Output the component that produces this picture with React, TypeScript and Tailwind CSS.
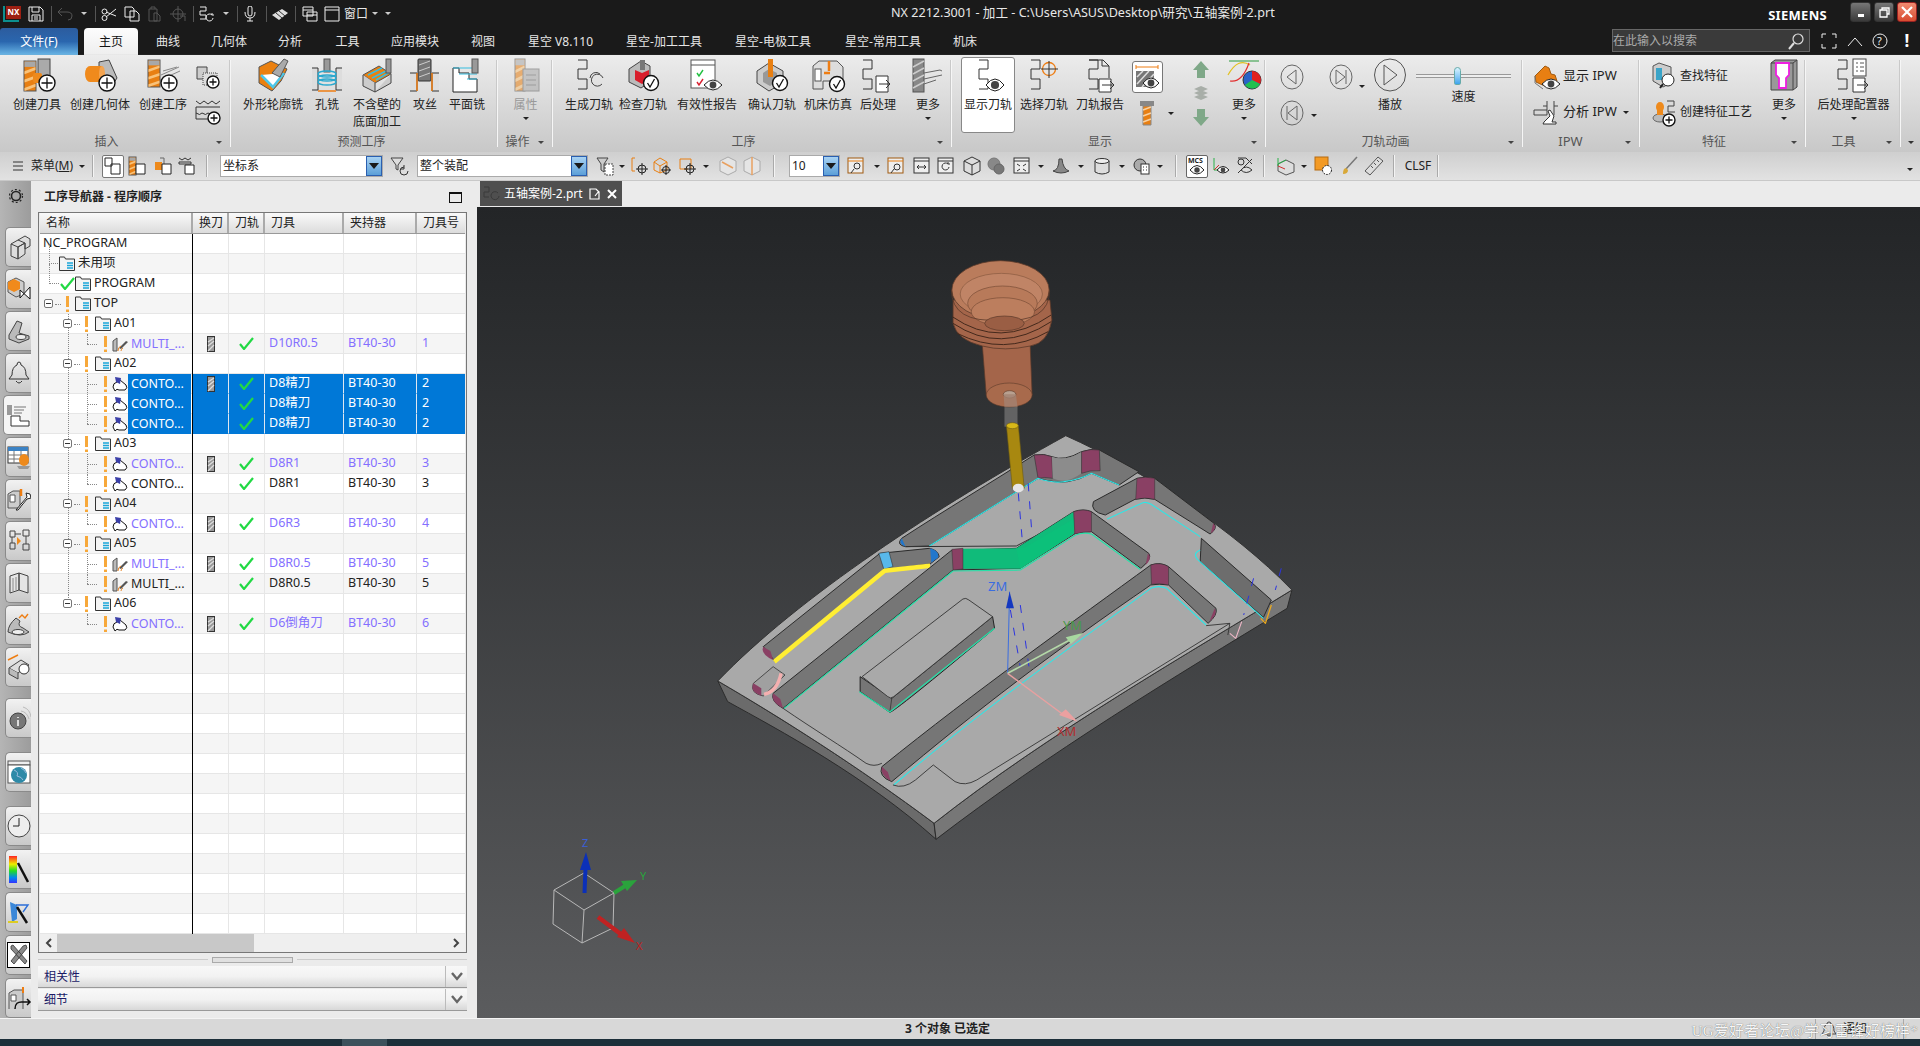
import React from "react";

type P = { children?: React.ReactNode; w?: number; h?: number };
const I = ({ children, w = 34, h = 34 }: P) => (
  <svg width={w} height={h} viewBox={`0 0 ${w} ${h}`} className="block shrink-0 overflow-visible" fill="none">
    {children}
  </svg>
);

const Mill = ({ x = 2, y = 4, w = 12, h = 28 }: { x?: number; y?: number; w?: number; h?: number }) => {
  const s = h / 5;
  return (
    <g>
      <rect x={x} y={y} width={w} height={h} fill="#e87f12" stroke="#555" strokeWidth="1" />
      <rect x={x + 0.5} y={y + 0.5} width={w - 1} height={s * 0.9} fill="#a8a8a8" />
      {[1, 2.4, 3.8].map((k) => (
        <path key={k} d={`M${x + 0.5} ${y + s * (k + 0.7)}L${x + w - 0.5} ${y + s * k}V${y + s * (k + 0.5)}L${x + 0.5} ${y + s * (k + 1.2)}Z`} fill="#f8c27a" />
      ))}
    </g>
  );
};
const Plus = ({ cx = 25, cy = 24, r = 8 }: { cx?: number; cy?: number; r?: number }) => (
  <g>
    <circle cx={cx} cy={cy} r={r} fill="#fff" stroke="#111" strokeWidth="1.4" />
    <path d={`M${cx - r + 2.5} ${cy}H${cx + r - 2.5}M${cx} ${cy - r + 2.5}V${cy + r - 2.5}`} stroke="#111" strokeWidth="1.3" />
  </g>
);
const Chk = ({ cx = 26, cy = 25, r = 7.5 }: { cx?: number; cy?: number; r?: number }) => (
  <g>
    <circle cx={cx} cy={cy} r={r} fill="#fff" stroke="#111" strokeWidth="1.4" />
    <path d={`M${cx - 3.5} ${cy}l2.5 4l4.5 -8`} stroke="#111" strokeWidth="1.3" />
  </g>
);
const Eye = ({ cx = 24, cy = 26, rx = 9, ry = 6 }: { cx?: number; cy?: number; rx?: number; ry?: number }) => (
  <g>
    <path d={`M${cx - rx} ${cy}Q${cx} ${cy - ry * 2} ${cx + rx} ${cy}Q${cx} ${cy + ry * 2} ${cx - rx} ${cy}Z`} fill="#fff" stroke="#222" strokeWidth="1" />
    <circle cx={cx} cy={cy} r={ry * 0.68} fill="#444" />
  </g>
);
const Sp = ({ x = 2, y = 1 }: { x?: number; y?: number }) => (
  <path d={`M${x} ${y}h9v9h-9v10h9v10h-9`} stroke="#333" strokeWidth="1" fill="none" />
);
const Arrow = ({ c = "" }: { c?: string }) => <span className={`inline-block h-0 w-0 border-x-[3px] border-t-[3px] border-x-transparent border-t-[#222] ${c}`} />;

const ChkG = () => (
  <svg width="15" height="13" viewBox="0 0 15 13" className="block shrink-0">
    <path d="M1 7l4 5l9 -11" stroke="#22d944" strokeWidth="2.2" fill="none" />
  </svg>
);
const Folder = () => (
  <svg width="16" height="15" viewBox="0 0 16 15" className="block shrink-0">
    <path d="M.5 14.5V1h5l1 2h9v11.5z" fill="#f4f4f4" stroke="#333" />
    <path d="M8 7h6M8 9.5h6M8 12h6" stroke="#1aa5d8" strokeWidth="1.4" />
  </svg>
);
const Bang = () => (
  <svg width="3" height="16" viewBox="0 0 3 16" className="block shrink-0">
    <path d="M0 0h3v11H0zM0 13.5h3V16H0z" fill="#f7a83a" />
  </svg>
);
const OpC = () => (
  <svg width="16" height="16" viewBox="0 0 16 16" className="block shrink-0">
    <path d="M1 11Q1 7 5 6l3-2l6 5q2 3-1 5H7Q5 12 3 15Z" fill="#fff" stroke="#111" />
    <path d="M3 1l6 1l-1 6L4 6z" fill="#3a3fa8" />
  </svg>
);
const OpM = () => (
  <svg width="16" height="16" viewBox="0 0 16 16" className="block shrink-0">
    <path d="M1 15V5l4-3v13z" fill="#bbb" stroke="#555" />
    <path d="M7 12l7-7l2 1l-7 7z" fill="#555" />
    <path d="M6 15q0-4 3-5M9 15q0-2 2-3" stroke="#e8872a" fill="none" />
  </svg>
);
const ToolCh = () => (
  <svg width="8" height="16" viewBox="0 0 8 16" className="block">
    <rect x=".5" y=".5" width="7" height="15" fill="#9a9a9a" stroke="#333" />
    <path d="M1 6l6-4M1 10l6-5M1 15l6-6" stroke="#ddd" strokeWidth="1.2" />
  </svg>
);

type Row = {
  k: "root" | "unused" | "prog" | "top" | "grp" | "op";
  t?: string;
  op?: "c" | "m";
  tool?: string;
  num?: string;
  blue?: boolean;
  sel?: boolean;
  ch?: boolean;
  last?: boolean;
  grpLast?: boolean;
  cont?: boolean;
  chk?: boolean;
};
const rows: Row[] = [
  { k: "root", t: "NC_PROGRAM" },
  { k: "unused", t: "未用项" },
  { k: "prog", t: "PROGRAM" },
  { k: "top", t: "TOP" },
  { k: "grp", t: "A01" },
  { k: "op", op: "m", t: "MULTI_...", tool: "D10R0.5", num: "1", blue: true, ch: true, last: true, cont: true, chk: true },
  { k: "grp", t: "A02" },
  { k: "op", op: "c", t: "CONTO...", tool: "D8精刀", num: "2", sel: true, ch: true, cont: true, chk: true },
  { k: "op", op: "c", t: "CONTO...", tool: "D8精刀", num: "2", sel: true, cont: true, chk: true },
  { k: "op", op: "c", t: "CONTO...", tool: "D8精刀", num: "2", sel: true, last: true, cont: true, chk: true },
  { k: "grp", t: "A03" },
  { k: "op", op: "c", t: "CONTO...", tool: "D8R1", num: "3", blue: true, ch: true, cont: true, chk: true },
  { k: "op", op: "c", t: "CONTO...", tool: "D8R1", num: "3", last: true, cont: true, chk: true },
  { k: "grp", t: "A04" },
  { k: "op", op: "c", t: "CONTO...", tool: "D6R3", num: "4", blue: true, ch: true, last: true, cont: true, chk: true },
  { k: "grp", t: "A05" },
  { k: "op", op: "m", t: "MULTI_...", tool: "D8R0.5", num: "5", blue: true, ch: true, cont: true, chk: true },
  { k: "op", op: "m", t: "MULTI_...", tool: "D8R0.5", num: "5", last: true, cont: true, chk: true },
  { k: "grp", t: "A06", grpLast: true },
  { k: "op", op: "c", t: "CONTO...", tool: "D6倒角刀", num: "6", blue: true, ch: true, last: true, chk: true },
];
const allRows: Row[] = [...rows, ...Array.from({ length: 15 }, () => ({ k: "root" } as Row))];

const Minus = ({ c }: { c: string }) => (
  <span className={`absolute top-[5px] flex h-[9px] w-[9px] items-center justify-center rounded-[2px] border border-[#777] bg-white ${c}`}>
    <span className="h-px w-[5px] bg-[#333]" />
  </span>
);

const NameCell = ({ r }: { r: Row }) => {
  const txt = r.sel ? "text-white" : r.blue ? "text-[#8470ff]" : "text-[#222]";
  return (
    <div className="h-full w-[153px] shrink-0 border-r border-black">
      <div className="relative flex h-full items-center border-b border-[#e6e6e6]">
        {r.k === "root" && r.t && <span className="pl-[3px]">{r.t}</span>}
        {r.k === "unused" && (
          <div className="flex items-center pl-[19px]">
            <span className="absolute left-[9px] top-[-9px] h-[19px] w-[9px] border-b border-l border-dotted border-[#888]" />
            <Folder />
            <span className="pl-[3px]">{r.t}</span>
          </div>
        )}
        {r.k === "prog" && (
          <div className="flex items-center pl-[20px]">
            <span className="absolute left-[9px] top-[-10px] h-[20px] w-[10px] border-b border-l border-dotted border-[#888]" />
            <ChkG />
            <Folder />
            <span className="pl-[3px]">{r.t}</span>
          </div>
        )}
        {r.k === "top" && (
          <div className="flex items-center pl-[26px]">
            <Minus c="left-[4px]" />
            <span className="absolute left-[15px] top-[10px] w-[6px] border-t border-dotted border-[#888]" />
            <Bang />
            <span className="w-[6px]" />
            <Folder />
            <span className="pl-[3px]">{r.t}</span>
          </div>
        )}
        {r.k === "grp" && (
          <div className="flex items-center pl-[45px]">
            <span className={`absolute left-[28px] top-0 border-l border-dotted border-[#888] ${r.grpLast ? "h-[6px]" : "h-full"}`} />
            <Minus c="left-[23px]" />
            <span className="absolute left-[34px] top-[10px] w-[6px] border-t border-dotted border-[#888]" />
            <Bang />
            <span className="w-[7px]" />
            <Folder />
            <span className="pl-[3px]">{r.t}</span>
          </div>
        )}
        {r.k === "op" && (
          <div className="flex h-full items-center pl-[64px]">
            {r.cont && <span className="absolute left-[28px] top-0 h-full border-l border-dotted border-[#888]" />}
            <span className={`absolute left-[47px] top-0 border-l border-dotted border-[#888] ${r.last ? "h-[10px]" : "h-full"}`} />
            <span className="absolute left-[47px] top-[10px] w-[10px] border-t border-dotted border-[#888]" />
            <Bang />
            <span className="w-[5px]" />
            {r.op === "m" ? <OpM /> : <OpC />}
            <span className={`flex h-[20px] w-[63px] items-center self-start ${r.sel ? "bg-[#0078d7]" : ""}`}>
              <span className={`pl-[3px] ${txt}`}>{r.t}</span>
            </span>
          </div>
        )}
      </div>
    </div>
  );
};

const TRow = ({ r, i }: { r: Row; i: number }) => {
  const txt = r.sel ? "text-white" : r.blue ? "text-[#8470ff]" : "text-[#222]";
  const cell = r.sel ? "bg-[#0078d7] border-r-[#dfe7f0] border-b-[#0078d7]" : "border-r-[#e6e6e6] border-b-[#e6e6e6]";
  return (
    <div className={`flex h-[20px] shrink-0 ${i % 2 ? "bg-[#f5f5f5]" : "bg-white"}`}>
      <NameCell r={r} />
      <div className={`flex h-full w-[36px] items-center justify-center border-r border-b ${cell}`}>{r.ch && <ToolCh />}</div>
      <div className={`flex h-full w-[36px] items-center justify-center border-r border-b ${cell}`}>{r.chk && <ChkG />}</div>
      <div className={`flex h-full w-[79px] items-center border-r border-b pl-[4px] ${cell} ${txt}`}>{r.tool}</div>
      <div className={`flex h-full w-[73px] items-center border-r border-b pl-[4px] ${cell} ${txt}`}>{r.tool && "BT40-30"}</div>
      <div className={`flex h-full flex-1 items-center border-b pl-[5px] ${r.sel ? "bg-[#0078d7] border-b-[#0078d7]" : "border-b-[#e6e6e6]"} ${txt}`}>{r.num}</div>
    </div>
  );
};

const RB = ({ children, active }: { children: React.ReactNode; active?: boolean }) => (
  <div className={`flex h-[40px] items-center justify-center rounded-l-[5px] border border-r-0 border-[#8a8a8a] ${active ? "ml-[3px] w-[28px] bg-[#f4f4f4]" : "ml-[5px] w-[26px] bg-gradient-to-b from-[#f2f2f2] to-[#c9c9c9]"}`}>
    {children}
  </div>
);
const R = ({ children }: P) => <I w={24} h={26}>{children}</I>;

const Rail = () => (
  <div className="flex w-[31px] shrink-0 flex-col bg-gradient-to-r from-[#b5b5b5] to-[#9c9c9c]">
    <div className="flex h-[46px] justify-center pt-[7px] pl-[0px]">
      <svg width="16" height="16" viewBox="0 0 16 16"><circle cx="8" cy="8" r="4.5" stroke="#222" strokeWidth="1.6" fill="none" /><circle cx="8" cy="8" r="6.5" stroke="#222" strokeWidth="1.2" strokeDasharray="2 2.1" fill="none" /></svg>
    </div>
    <div className="flex flex-col gap-[2px]">
      <RB><R><path d="M4 10l7-4l7 3l-7 4zM4 10v12l7 3V13M11 13l7-4v11l-7 5zM11 6l7-4l5 3v7l-5 3V9" fill="#ddd" stroke="#444" /></R></RB>
      <RB><R><path d="M9 2l8 4v12l-8 3l-8-5V6z" fill="#ccc" stroke="#555" /><path d="M1 6l6-3l6 3v7l-6 3l-6-3z" fill="#f08a1c" /><path d="M13 14l10 9V11L13 22z" fill="#fff" stroke="#111" /></R></RB>
      <RB><R><path d="M2 17L10 3l5 2l-3 10l10 3v3l-10 4L2 21z" fill="#bbb" stroke="#444" /><ellipse cx="14" cy="19" rx="5" ry="2.5" fill="#eee" stroke="#444" /></R></RB>
      <RB><R><path d="M12 2q2 0 2 3q5 2 5 10l3 4H2l3-4q0-8 5-10q0-3 2-3z" fill="none" stroke="#333" /><path d="M9 21q3 4 6 0" stroke="#333" /></R></RB>
      <RB active><R><path d="M1 3h5v10H1z" fill="#999" /><path d="M8 5h12M8 8h10M8 11h8" stroke="#777" /><path d="M5 24V14h9v5h9v5z" fill="#fff" stroke="#333" /></R></RB>
      <RB><R><rect x="1" y="3" width="20" height="16" fill="#fff" stroke="#333" /><rect x="1" y="3" width="20" height="4" fill="#3b82c4" /><path d="M1 11h20M1 15h20M7 7v12M14 7v12" stroke="#777" /><ellipse cx="17" cy="16" rx="5" ry="6" fill="#ee8a1c" /><path d="M10 22h13l-2 3H12z" fill="#999" /></R></RB>
      <RB><R><path d="M1 22V8l5-3h7v17z" fill="#ccc" stroke="#555" /><path d="M3 9h5v7H3z" fill="#fff" stroke="#555" /><path d="M14 3v7" stroke="#ee7d12" strokeWidth="2.5" /><path d="M9 24L20 11l-1-4l4 1l1 4l-4 1l-9 11z" fill="#fff" stroke="#222" /></R></RB>
      <RB><R><path d="M3 3h5v6H3zM3 15h5v6H3zM16 2h6v6h-6zM16 16h6v6h-6zM5 9v6M19 8v8M8 6h6" stroke="#444" fill="none" /><path d="M10 9l4 4l-4 4z" fill="#ee8a1c" /></R></RB>
      <RB><R><path d="M3 6l9-3v17l-9 3zM12 3l9 3v17l-9-3z" fill="#e5e5e5" stroke="#444" /><path d="M6 8v13M9 7v13" stroke="#888" /></R></RB>
      <RB><R><path d="M1 20q0-7 8-14l4 3q-3 5 3 7l6 4q-8 6-21 0z" fill="#bbb" stroke="#444" /><ellipse cx="11" cy="20" rx="6" ry="2.5" fill="#eee" stroke="#444" /><path d="M12 6l3-3l3 3l3-4" stroke="#ee7d12" fill="none" strokeWidth="1.4" /></R></RB>
      <RB><R><path d="M2 14L14 6l8 5L11 19z" fill="#ddd" stroke="#444" /><path d="M2 14v6l9 5v-6" fill="#bbb" stroke="#444" /><path d="M1 6l10-5" stroke="#ee7d12" strokeWidth="1.4" /><circle cx="17" cy="15" r="5" fill="#fff" stroke="#333" /></R></RB>
    </div>
    <div className="mt-[11px]">
      <RB><R><circle cx="11" cy="16" r="8" fill="#777" stroke="#444" /><path d="M11 12v1M11 15v6" stroke="#fff" strokeWidth="1.5" /><path d="M14 6q6 1 8 8M16 2q7 2 8 10" stroke="#bbb" fill="none" /></R></RB>
    </div>
    <div className="mt-[14px]">
      <RB><R><rect x="1" y="2" width="22" height="4" fill="#eee" stroke="#555" /><rect x="1" y="6" width="22" height="18" fill="#fff" stroke="#555" /><circle cx="12" cy="16" r="8" fill="#2e8aa8" /><path d="M7 11q5 2 3 6q5 1 6 4M14 9q4 2 5 5" stroke="#9bd" fill="none" /></R></RB>
    </div>
    <div className="mt-[14px] flex flex-col gap-[3px]">
      <RB><R><circle cx="12" cy="13" r="11" fill="#eee" stroke="#444" /><path d="M12 5v8H6" stroke="#222" /></R></RB>
      <RB><svg width="24" height="28" viewBox="0 0 24 28"><defs><linearGradient id="rb" x1="0" y1="0" x2="0" y2="1"><stop offset="0" stopColor="#f22" /><stop offset=".3" stopColor="#ee0" /><stop offset=".55" stopColor="#2d2" /><stop offset=".8" stopColor="#08e" /><stop offset="1" stopColor="#33f" /></linearGradient></defs><rect x="2" y="1" width="8" height="27" fill="url(#rb)" /><path d="M11 8l10 19" stroke="#111" strokeWidth="2.5" /></svg></RB>
      <RB><R><path d="M3 3l7 3v14l-5 3z" fill="#3a87d8" /><path d="M9 6h12l-5 7" stroke="#2c6fd8" strokeWidth="1.4" fill="none" /><path d="M10 8l10 16" stroke="#111" strokeWidth="2.5" /><path d="M1 23h10" stroke="#dc2" strokeWidth="2" /></R></RB>
      <RB><div className="h-[26px] w-[23px] border border-black bg-white"><svg width="21" height="24" viewBox="0 0 21 24" className="block"><path d="M3 3l2-1l14 16l-2 3L3 6zM18 2l1 3L6 21l-3-3L15 3z" fill="#8a8a8a" stroke="#333" strokeWidth=".8" /></svg></div></RB>
      <RB><R><path d="M2 24V8l5-3h9v19" fill="#ccc" stroke="#555" /><path d="M16 2v6" stroke="#ee7d12" strokeWidth="2" /><path d="M4 10h5v6H4z" fill="#fff" stroke="#555" /><path d="M8 24q0-8 8-7h7M20 14l3 3l-3 3" stroke="#111" fill="none" strokeWidth="1.5" /></R></RB>
    </div>
  </div>
);

const Item = ({ c, label, icon, arrow, two }: { c: string; label: string; icon: React.ReactNode; arrow?: boolean; two?: string }) => (
  <div className={`flex shrink-0 flex-col items-center pt-[4px] ${c}`}>
    <div className="flex h-[34px] items-center justify-center">{icon}</div>
    <div className="mt-[3px] whitespace-nowrap leading-[17px]">{label}</div>
    {two && <div className="whitespace-nowrap leading-[17px]">{two}</div>}
    {arrow && <Arrow c="mt-[4px]" />}
  </div>
);
const Group = ({ c, label, children, lc = "", noArrow }: { c: string; label: string; children: React.ReactNode; lc?: string; noArrow?: boolean }) => (
  <div className={`relative flex h-full shrink-0 flex-col ${c}`}>
    <div className="flex h-[77px]">{children}</div>
    <div className={`flex h-[20px] items-center justify-center text-[#555] ${lc}`}>{label}</div>
    {!noArrow && <Arrow c="absolute bottom-[8px] right-[9px] border-t-[#444]" />}
    <span className="absolute bottom-[5px] right-0 top-[5px] w-[2px] border-r border-[#f6f6f6] bg-[#c9c9c9]" />
  </div>
);

const Ribbon = () => (
  <div className="flex h-[97px] shrink-0 bg-gradient-to-b from-[#ececec] to-[#c8c8c8] text-[12px] text-[#222] shadow-[0_1px_2px_#888]">
    <Group c="w-[231px]" label="插入" lc="pr-[18px]">
      <Item c="ml-[5px] w-[64px]" label="创建刀具" icon={<I><Mill x={4} y={2} w={12} h={30} /><rect x="18" y="0" width="12" height="18" fill="#aaa" stroke="#444" /><rect x="13" y="14" width="9" height="10" rx="2" fill="#ee8a1c" /><Plus cx={27} cy={24} /></I>} />
      <Item c="w-[62px]" label="创建几何体" icon={<I><path d="M16 3l10-2l8 18l-8 12L16 18z" fill="#bbb" stroke="#444" /><ellipse cx="7" cy="15" rx="5" ry="8" fill="#f08a1c" /><rect x="7" y="7" width="12" height="16" fill="#f08a1c" /><ellipse cx="19" cy="15" rx="3" ry="8" fill="#f4a450" /><Plus cx={24} cy={24} /></I>} />
      <Item c="w-[64px]" label="创建工序" icon={<I><Mill x={2} y={1} w={12} h={27} /><path d="M15 16l18-8M14 21l20-9M17 12l14-4" stroke="#888" /><Plus cx={23} cy={24} /></I>} />
      <div className="flex w-[26px] flex-col items-center">
        <div className="mt-[10px]"><I w={26} h={24}><path d="M2 2h10v12H2z" fill="#ccc" stroke="#444" /><path d="M8 8h14v12H8z" fill="#ddd" stroke="#444" strokeDasharray="1 1" /><Plus cx={18} cy={17} r={6} /></I></div>
        <div className="mt-[11px]"><I w={26} h={24}><path d="M1 1l4 3l4-3l4 3l4-3l4 3l4-3M1 7h24M1 7v12h12M1 13q4 3 6 0q4 3 6 0q4 3 6 0" stroke="#333" fill="none" /><Plus cx={19} cy={18} r={6} /></I></div>
      </div>
    </Group>
    <Group c="w-[267px]" label="预测工序" lc="pr-[6px]" noArrow>
      <Item c="ml-[7px] w-[70px]" label="外形轮廓铣" icon={<I><path d="M3 8l12-6l16 8l-6 12L16 32L3 24z" fill="#ea8010" stroke="#555" /><path d="M5 16L17 28L28 14" stroke="#4cc7ea" strokeWidth="2.5" fill="#fff" /><path d="M16 14L28 0l4 2l-8 16z" fill="#aaa" stroke="#555" /></I>} />
      <Item c="w-[38px]" label="孔铣" icon={<I><rect x="14" y="0" width="6" height="13" fill="#999" stroke="#555" /><path d="M2 9h6v22H2M32 9h-6v22h6" fill="#ddd" stroke="#333" /><path d="M8 32h18" stroke="#ee7d12" strokeWidth="1.5" /><ellipse cx="17" cy="15" rx="9" ry="3" stroke="#2ba9cf" strokeWidth="1.5" /><ellipse cx="17" cy="19" rx="9" ry="3" stroke="#2ba9cf" strokeWidth="1.5" /><ellipse cx="17" cy="23" rx="9" ry="3" stroke="#2ba9cf" strokeWidth="1.5" /></I>} />
      <Item c="w-[62px]" label="不含壁的" two="底面加工" icon={<I><path d="M3 16l16-9l12 8l-16 9z" fill="#ea8010" stroke="#555" /><path d="M3 16v11l12 6v-9M15 33l16-9V15" fill="#ccc" stroke="#444" /><path d="M8 16l14-7M12 19l14-7M16 21l14-8" stroke="#37bde0" strokeWidth="1.6" /><rect x="26" y="0" width="5" height="14" fill="#999" stroke="#555" /></I>} />
      <Item c="w-[34px]" label="攻丝" icon={<I><rect x="10" y="0" width="13" height="22" rx="1" fill="#777" stroke="#333" /><path d="M11 6l11-4M11 12l11-4M11 18l11-4" stroke="#ccc" /><path d="M2 14h7v18H2M31 14h-7v18h7" fill="#ddd" stroke="#333" /><path d="M9 14v18M24 14v18" stroke="#ee7d12" strokeWidth="1.5" /></I>} />
      <Item c="w-[50px]" label="平面铣" icon={<I><path d="M3 9v24h24V20h-8v-6H9V9z" fill="#fff" stroke="#222" /><path d="M3 9h24M9 15h18M17 20h10" stroke="#37bde0" strokeWidth="1.2" /><rect x="22" y="0" width="6" height="14" fill="#999" stroke="#555" /></I>} />
    </Group>
    <Group c="w-[55px]" label="操作" lc="pr-[16px]">
      <Item c="w-[55px] text-[#999]" label="属性" arrow icon={<I><g opacity=".55"><Mill x={6} y={0} w={10} h={32} /><rect x="14" y="10" width="16" height="22" fill="#aaa" stroke="#666" /><path d="M17 16h10M17 21h10M17 26h10" stroke="#666" /></g></I>} />
    </Group>
    <Group c="w-[399px]" label="工序" lc="pr-[18px]">
      <Item c="ml-[8px] w-[56px]" label="生成刀轨" icon={<I><Sp x={6} /><path d="M31 19a6 6 0 1 0-1 6M18 19a6 6 0 0 1 10-4" stroke="#444" fill="none" /></I>} />
      <Item c="w-[52px]" label="检查刀轨" icon={<I><path d="M15 2l9 5v16l-9 6l-12-6V10z" fill="#bbb" stroke="#444" /><path d="M9 11l7 3l7-3v10l-7 4l-7-4z" fill="#d81e2c" /><rect x="14" y="1" width="5" height="10" fill="#777" /><Chk cx={25} cy={24} /></I>} />
      <Item c="w-[76px]" label="有效性报告" icon={<I><rect x="1" y="1" width="24" height="28" fill="#fff" stroke="#555" /><path d="M1 6h24" stroke="#555" /><path d="M7 14l2 3l4-6" stroke="#22c040" strokeWidth="1.4" /><path d="M7 23l2 3l4-6" stroke="#d82030" strokeWidth="1.4" /><Eye cx={23} cy={26} rx={9} ry={5} /></I>} />
      <Item c="w-[54px]" label="确认刀轨" icon={<I><path d="M2 12l12-8l14 8v12L14 32L2 24z" fill="#ccc" stroke="#444" /><path d="M8 14l6-4l8 4v9l-7 4l-7-4z" fill="#999" /><path d="M13 0h5v18h-5z" fill="#e87f12" /><Chk cx={25} cy={24} /></I>} />
      <Item c="w-[58px]" label="机床仿真" icon={<I><path d="M2 30V7l6-5h18l6 6v22H22v-8H12v8z" fill="#ddd" stroke="#555" /><rect x="4" y="10" width="6" height="12" fill="#fff" stroke="#555" /><path d="M18 2v10M13 14h6" stroke="#ee7d12" strokeWidth="2.5" /><Chk cx={26} cy={25} /></I>} />
      <Item c="w-[42px]" label="后处理" icon={<I><Sp x={2} /><path d="M15 17h12v16H15zM18 25h11M25 21l4 4l-4 4" stroke="#333" fill="#fff" /></I>} />
      <Item c="ml-[5px] w-[48px]" label="更多" arrow icon={<I><rect x="2" y="0" width="11" height="33" fill="#888" stroke="#555" /><path d="M2 8l11-6M2 15l11-6M2 22l11-6M2 29l11-6" stroke="#ccc" strokeWidth="1.5" /><path d="M13 14l16-3l2 1M13 20l18-4M13 25l12-4" stroke="#666" /></I>} />
    </Group>
    <Group c="w-[314px]" label="显示" lc="pr-[18px]">
      <div className="ml-[9px] mt-[2px] h-[76px] w-[54px] shrink-0 rounded-[3px] border border-[#888] bg-white">
        <Item c="mt-[-3px] w-[52px]" label="显示刀轨" icon={<I><Sp x={8} /><Eye cx={24} cy={26} /></I>} />
      </div>
      <Item c="w-[58px]" label="选择刀轨" icon={<I><Sp x={4} /><circle cx="22" cy="10" r="6.5" stroke="#ee7d12" strokeWidth="1.3" /><path d="M14 10h17M22 2v17" stroke="#333" /></I>} />
      <Item c="w-[54px]" label="刀轨报告" icon={<I><Sp x={6} /><path d="M6 1h14l6 6v12M19 1v6h7" stroke="#333" /><path d="M16 20h12v13H16zM19 26h12M27 22l4 4l-4 4" stroke="#333" fill="#fff" /></I>} />
      <div className="flex w-[36px] shrink-0 flex-col items-center pt-[6px] pl-[4px]">
        <div className="flex h-[32px] w-[31px] items-center justify-center rounded-[3px] border border-[#777] bg-white">
          <I w={26} h={26}><path d="M2 3h22M2 1v4M24 1v4" stroke="#ee7d12" /><rect x="2" y="7" width="18" height="16" fill="#777" /><path d="M3 13l6-6M3 20l12-13M8 23l12-13" stroke="#ddd" strokeWidth="1.5" /><Eye cx={17} cy={19} rx={8} ry={5} /></I>
        </div>
        <div className="mt-[7px]">
          <I w={14} h={26}><path d="M0 1h14v5H0z" fill="#888" /><path d="M3 6h8v19H3z" fill="#e87f12" stroke="#888" /><path d="M3 10l8-3M3 16l8-3M3 22l8-3" stroke="#f8d0a0" strokeWidth="1.5" /></I>
        </div>
      </div>
      <div className="flex w-[27px] shrink-0 items-end justify-end pb-[17px]"><Arrow c="mr-[16px]" /></div>
      <div className="flex w-[24px] shrink-0 flex-col items-center pt-[6px] ml-[-1px]">
        <I w={16} h={17}><path d="M8 0l8 9h-4v8H4V9H0z" fill="#7fa888" /></I>
        <div className="mt-[8px]"><I w={14} h={14}><path d="M7 0l7 3l-7 3l-7-3zM7 4l7 3l-7 3l-7-3zM7 8l7 3l-7 3l-7-3z" fill="#a8aea8" /></I></div>
        <div className="mt-[9px]"><I w={16} h={17}><path d="M8 17L16 8h-4V0H4v8H0z" fill="#7fa888" /></I></div>
      </div>
      <Item c="ml-[14px] w-[34px]" label="更多" arrow icon={<I><path d="M2 2h30" stroke="#2a9a3c" /><path d="M1 16q10-18 22-10" stroke="#e2c020" strokeWidth="1.2" /><path d="M3 22Q15 24 22 4" stroke="#e23030" strokeWidth="1.2" /><circle cx="25" cy="21" r="9" fill="#2a62c8" stroke="#333" /><path d="M25 21V12a9 9 0 0 1 8 13z" fill="#e02020" /><path d="M25 21l8 4a9 9 0 0 1-15 1z" fill="#22c050" /></I>} />
    </Group>
    <Group c="w-[257px]" label="刀轨动画" lc="pr-[18px]">
      <div className="flex w-[51px] flex-col items-center pl-[0px] pt-[9px]">
        <I w={24} h={26}><ellipse cx="12" cy="13" rx="11" ry="12" fill="none" stroke="#666" /><path d="M16 6v14l-9-7z" fill="none" stroke="#666" /></I>
        <div className="mt-[10px]"><I w={24} h={26}><ellipse cx="12" cy="13" rx="11" ry="12" fill="none" stroke="#666" /><path d="M17 6v14l-9-7zM7 6v14" fill="none" stroke="#666" /></I></div>
      </div>
      <div className="mt-[49px] w-[10px]"><Arrow c="ml-[-6px]" /></div>
      <div className="flex w-[28px] flex-col items-center pt-[9px]">
        <I w={24} h={26}><ellipse cx="12" cy="13" rx="11" ry="12" fill="none" stroke="#666" /><path d="M7 6v14l9-7zM17 6v14" fill="none" stroke="#666" /></I>
      </div>
      <div className="mt-[20px] w-[15px]"><Arrow c="ml-[4px]" /></div>
      <Item c="w-[40px]" label="播放" icon={<I h={34} w={34}><ellipse cx="17" cy="16" rx="15.5" ry="16" fill="none" stroke="#555" /><path d="M11 6v20l13-10z" fill="none" stroke="#555" /></I>} />
      <div className="relative ml-[6px] flex w-[95px] flex-col pt-[19px]">
        <div className="h-[4px] w-full border-y border-[#999] bg-[#eee]" />
        <div className="absolute left-[38px] top-[12px] h-[18px] w-[7px] rounded-t-[4px] rounded-b-[2px] border border-[#6aa] bg-gradient-to-b from-[#d8f4ff] to-[#3aa4ec]" />
        <div className="mt-[10px] text-center leading-[17px]">速度</div>
      </div>
    </Group>
    <Group c="w-[117px]" label="IPW" lc="pr-[22px] text-[13px]">
      <div className="flex flex-col pt-[3px] pl-[10px]">
        <div className="flex h-[36px] items-center">
          <I w={28} h={28}><path d="M2 14l10-10l4 2l2 6l4 1l2 6l-8 7L3 20z" fill="#e87f12" stroke="#a05a10" /><path d="M2 14v7l8 6" stroke="#777" /><Eye cx={18} cy={22} rx={9} ry={5} /></I>
          <span className="pl-[2px] text-[13px]">显示 IPW</span>
        </div>
        <div className="flex h-[36px] items-center">
          <I w={28} h={28}><path d="M1 12h13M1 17h13M1 12v5M14 3v14M21 3v14M10 8h4M25 8h-4" stroke="#444" /><path d="M10 26h13v-2h-4l2-6l-4-6l-2 1l2 5l-6 6z" fill="#fff" stroke="#333" /></I>
          <span className="pl-[2px] text-[13px]">分析 IPW</span>
          <Arrow c="ml-[6px]" />
        </div>
      </div>
    </Group>
    <Group c="w-[166px]" label="特征" lc="pr-[18px]">
      <div className="flex w-[129px] flex-col pt-[3px] pl-[12px]">
        <div className="flex h-[36px] items-center">
          <I w={26} h={28}><path d="M1 4l6-3l12 4v16l-8 4l-10-6z" fill="#ccc" stroke="#555" /><rect x="4" y="6" width="6" height="12" fill="#3aa4c8" /><circle cx="16" cy="18" r="6" fill="#fff" stroke="#222" /><path d="M11 22l-3 4" stroke="#222" strokeWidth="2" /></I>
          <span className="pl-[2px]">查找特征</span>
        </div>
        <div className="flex h-[36px] items-center">
          <I w={26} h={28}><ellipse cx="8" cy="20" rx="7" ry="4" fill="#bbb" stroke="#666" /><ellipse cx="8" cy="9" rx="4" ry="5" fill="#ee8a1c" /><rect x="5" y="9" width="6" height="8" fill="#ee8a1c" /><path d="M15 3h7v5h-6v6h7" stroke="#444" /><Plus cx={17} cy={22} r={6} /></I>
          <span className="whitespace-nowrap pl-[2px]">创建特征工艺</span>
        </div>
      </div>
      <Item c="w-[30px]" label="更多" arrow icon={<I><path d="M4 4l4-3h22v27l-4 3H4z" fill="#999" stroke="#444" /><path d="M26 4l4-3M26 4v27M4 4h22" stroke="#444" fill="none" /><path d="M9 4h13v12l-3 3v10h-7V19l-3-3z" fill="#fff" stroke="#ee1ee0" strokeWidth="1.8" /></I>} />
    </Group>
    <Group c="w-[95px]" label="工具" lc="pr-[20px]">
      <Item c="w-[95px]" label="后处理配置器" arrow icon={<I><Sp x={1} /><rect x="16" y="0" width="13" height="17" fill="#fff" stroke="#444" /><path d="M19 4h2M23 4h4M19 8h2M23 8h4M19 12h2M23 12h4" stroke="#555" /><path d="M16 19h12v14H16zM20 26h11M27 22l4 4l-4 4" stroke="#333" fill="#fff" /></I>} />
    </Group>
    <div className="relative flex-1"><Arrow c="absolute bottom-[8px] right-[6px] border-t-[#333]" /></div>
  </div>
);

const B = ({ c, children }: { c: string; children?: React.ReactNode }) => (
  <div className={`flex shrink-0 items-center justify-center ${c}`}>{children}</div>
);
const Sep = ({ c }: { c: string }) => (
  <B c={c}><span className="h-[22px] w-[2px] border-r border-[#f4f4f4] bg-[#aaa]" /></B>
);
const Tg = ({ children }: P) => <I w={20} h={20}>{children}</I>;
const TA = ({ c }: { c: string }) => <B c={c}><Arrow /></B>;
const Doc = () => <path d="M2 2h7v8h-7zM8 8h9v10H8z" fill="#fff" stroke="#222" />;
const Combo = ({ c, t }: { c: string; t: string }) => (
  <div className={`flex h-[22px] shrink-0 items-center border border-[#aaa] bg-white pl-[2px] ${c}`}>
    <span className="flex-1 overflow-hidden whitespace-nowrap">{t}</span>
    <span className="flex h-full w-[16px] items-center justify-center border border-[#2a5fb0] bg-gradient-to-b from-[#a8d2f2] to-[#5b9fd8]">
      <span className="h-0 w-0 border-x-[5px] border-t-[6px] border-x-transparent border-t-[#1a1a1a]" />
    </span>
  </div>
);

const Toolbar = () => (
  <div className="flex h-[28px] shrink-0 items-center bg-gradient-to-b from-[#cfcfcf] to-[#e2e2e2] text-[12px] text-[#222]">
    <B c="ml-[8px] w-[20px]"><svg width="10" height="10" viewBox="0 0 10 10"><path d="M0 1h10M0 5h10M0 9h10" stroke="#333" /></svg></B>
    <B c="w-[45px] justify-end"><span className="whitespace-nowrap">菜单(<u>M</u>)</span></B>
    <TA c="w-[18px]" />
    <Sep c="w-[4px]" />
    <B c="ml-[7px] h-[23px] w-[22px] rounded-[2px] border border-[#777] bg-white"><Tg><Doc /></Tg></B>
    <B c="w-[26px]"><Tg><Mill x={2} y={1} w={7} h={18} /><path d="M9 8h9v10H9z" fill="#fff" stroke="#222" /></Tg></B>
    <B c="w-[26px]"><Tg><rect x="2" y="6" width="7" height="8" fill="#ee8a1c" /><path d="M7 2h4v6" stroke="#666" /><path d="M9 8h9v10H9z" fill="#fff" stroke="#222" /></Tg></B>
    <B c="w-[22px]"><Tg><path d="M2 2l3 2l3-2l3 2l3-2M2 6h12v2H2z" stroke="#333" /><path d="M8 9h9v9H8z" fill="#fff" stroke="#222" /></Tg></B>
    <Sep c="w-[18px]" />
    <Combo c="ml-[4px] w-[163px]" t="坐标系" />
    <B c="w-[34px]"><Tg><path d="M1 2h12l-5 7v5l-2-1V9z" fill="#ddd" stroke="#444" /><path d="M18 15a4 4 0 1 1-4-4M14 9v4h-3" stroke="#333" /></Tg></B>
    <Combo c="w-[171px]" t="整个装配" />
    <B c="ml-[6px] w-[24px]"><Tg><path d="M1 2h11l-4 6v8l-3-2V8z" fill="#ccc" stroke="#444" /><path d="M9 8h8v11H9z" fill="#fff" stroke="#444" strokeDasharray="2 1" /></Tg></B>
    <TA c="w-[8px]" />
    <B c="ml-[6px] w-[14px]"><Tg><path d="M6 2H3v13h3" stroke="#e87f12" /><circle cx="13" cy="13" r="4" stroke="#222" /><path d="M7 13h12M13 7v12" stroke="#222" /></Tg></B>
    <B c="ml-[4px] w-[24px]"><Tg><path d="M2 6l6-4l7 4v8l-7 3l-6-3z" fill="none" stroke="#e87f12" /><path d="M2 6l6 4l7-4M8 10v7" stroke="#e87f12" /><circle cx="14" cy="14" r="3.5" stroke="#222" /><path d="M9 14h10M14 9v10" stroke="#222" /></Tg></B>
    <B c="ml-[1px] w-[24px]"><Tg><path d="M3 3h11v10" stroke="#e87f12" /><path d="M3 3v10h8" stroke="#e87f12" /><circle cx="13" cy="13" r="4" stroke="#222" /><path d="M7 13h12M13 7v12" stroke="#222" /></Tg></B>
    <TA c="w-[14px]" />
    <B c="ml-[3px] w-[24px]"><Tg><path d="M10 1l8 4v10l-8 4l-8-4V5z" fill="#e5e5e5" stroke="#aaa" /><path d="M4 6l11 6" stroke="#e8a060" strokeWidth="1.5" /></Tg></B>
    <B c="w-[24px]"><Tg><path d="M10 1l8 4v10l-8 4l-8-4V5z" fill="#e5e5e5" stroke="#aaa" /><path d="M10 1v18" stroke="#e8a060" strokeWidth="1.5" /></Tg></B>
    <Sep c="w-[20px]" />
    <Combo c="ml-[5px] w-[51px]" t="10" />
    <B c="ml-[4px] w-[24px]"><Tg><rect x="2" y="2" width="15" height="15" fill="#eee" stroke="#a05a10" /><path d="M2 5h15" stroke="#e87f12" /><circle cx="11" cy="10" r="3" stroke="#333" /><path d="M8 13l-3 4" stroke="#333" /></Tg></B>
    <TA c="w-[18px]" />
    <B c="w-[20px]"><Tg><rect x="2" y="2" width="15" height="15" fill="#eee" stroke="#a05a10" /><path d="M2 5h15" stroke="#e87f12" /><circle cx="11" cy="11" r="3" stroke="#333" /><path d="M8 13l-3 4" stroke="#333" /></Tg></B>
    <B c="ml-[4px] w-[24px]"><Tg><rect x="2" y="2" width="15" height="15" fill="#eee" stroke="#333" /><path d="M2 5h15M5 11h9M5 11l2-2M5 11l2 2M14 11l-2-2M14 11l-2 2" stroke="#333" /></Tg></B>
    <B c="w-[24px]"><Tg><rect x="2" y="2" width="15" height="15" fill="#eee" stroke="#333" /><path d="M2 5h15" stroke="#333" /><path d="M13 11a3.5 3.5 0 1 1-1-3M12 6v2h2" stroke="#333" /></Tg></B>
    <B c="ml-[2px] w-[24px]"><Tg><path d="M10 1l8 4v10l-8 4l-8-4V5z" fill="#ddd" stroke="#333" /><path d="M2 5l8 4l8-4M10 9v10" stroke="#333" /></Tg></B>
    <B c="w-[24px]"><Tg><circle cx="8" cy="8" r="6" fill="#888" stroke="#777" /><circle cx="13" cy="13" r="5" fill="#777" stroke="#666" /></Tg></B>
    <B c="ml-[2px] w-[24px]"><Tg><rect x="2" y="2" width="15" height="15" fill="#eee" stroke="#333" /><path d="M2 5h15M5 8l3 2M14 8l-3 2M5 15l3-2M14 15l-3-2" stroke="#333" /></Tg></B>
    <TA c="w-[14px]" />
    <B c="ml-[1px] w-[24px]"><Tg><path d="M2 15Q8 14 8 3l3 0q1 10 7 12q-8 4-16 0z" fill="#888" stroke="#444" /></Tg></B>
    <TA c="w-[16px]" />
    <B c="ml-[1px] w-[24px]"><Tg><path d="M3 5q7-4 14 0v11q-7 4-14 0z" fill="#ddd" stroke="#333" /><ellipse cx="10" cy="5" rx="7" ry="2.5" fill="#eee" stroke="#333" /></Tg></B>
    <TA c="w-[16px]" />
    <B c="w-[24px]"><Tg><circle cx="8" cy="9" r="6" fill="#aaa" stroke="#333" /><rect x="9" y="8" width="8" height="10" fill="#fff" stroke="#333" /><path d="M11 11h1M14 11h1M11 14h1M14 14h1" stroke="#333" /></Tg></B>
    <TA c="w-[12px]" />
    <Sep c="w-[20px]" />
    <B c="h-[23px] w-[22px] rounded-[2px] border border-[#666] bg-white"><svg width="20" height="20" viewBox="0 0 20 20"><text x="1" y="7" fontSize="7" fill="#222" fontWeight="bold">MCS</text><path d="M3 14Q10 5 17 14Q10 22 3 14z" fill="#fff" stroke="#222" /><circle cx="10" cy="14" r="2.7" fill="#444" /></svg></B>
    <B c="ml-[1px] w-[24px]"><Tg><path d="M3 2v12h12" stroke="#2ab048" /><path d="M3 14l5-5" stroke="#d03030" /><path d="M6 14Q12 7 18 14Q12 20 6 14z" fill="#fff" stroke="#222" /><circle cx="12" cy="14" r="2.4" fill="#444" /></Tg></B>
    <B c="w-[24px]"><Tg><path d="M3 2h8l6 6M3 17l14-14" stroke="#333" /><circle cx="6" cy="6" r="3" stroke="#333" /><path d="M6 14Q11 8 17 14Q11 19 6 14z" fill="#ddd" stroke="#333" /></Tg></B>
    <Sep c="w-[14px]" />
    <B c="ml-[3px] w-[24px]"><Tg><path d="M10 4l8 4v8l-8 3l-8-4V8z" fill="#ddd" stroke="#555" /><path d="M2 2v8M2 8l8-4" stroke="#2ab048" /><path d="M2 10l7 3" stroke="#d03030" /></Tg></B>
    <TA c="w-[12px]" />
    <B c="ml-[1px] w-[24px]"><Tg><rect x="2" y="1" width="13" height="13" fill="#f39a24" stroke="#b66a10" /><circle cx="14" cy="14" r="4.5" fill="#fff" stroke="#222" strokeDasharray="2 1" /></Tg></B>
    <B c="ml-[3px] w-[24px]"><Tg><path d="M17 1L6 13" stroke="#777" strokeWidth="1.5" /><path d="M3 18q0-6 3-6l2 2q0 4-5 4z" fill="#d8a838" /></Tg></B>
    <B c="w-[24px]"><Tg><path d="M14 1l5 4L6 19l-5-4z" fill="#ddd" stroke="#555" /><path d="M7 10l2 2M10 7l2 2M13 4l2 2" stroke="#555" /></Tg></B>
    <Sep c="w-[16px]" />
    <B c="w-[32px]"><span>CLSF</span></B>
    <Sep c="w-[8px]" />
    <div className="flex-1" />
    <B c="mr-[6px] w-[8px] pt-[6px]"><Arrow /></B>
  </div>
);

const Q = ({ c, children }: { c: string; children?: React.ReactNode }) => (
  <div className={`flex shrink-0 items-center justify-center ${c}`}>{children}</div>
);
const WSep = ({ c }: { c: string }) => <Q c={c}><span className="h-[16px] w-px bg-[#555]" /></Q>;
const WArrow = ({ c }: { c: string }) => <Q c={c}><span className="h-0 w-0 border-x-[3px] border-t-[3px] border-x-transparent border-t-[#ccc]" /></Q>;

const TitleBar = () => (
  <div className="flex h-[27px] shrink-0 items-center bg-[#1a1a1a] text-[#e8e8e8]">
    <Q c="ml-[3px] w-[16px]">
      <div className="relative h-[16px] w-[16px] border-b-2 border-l-2 border-[#0d8f8f]">
        <div className="ml-[1px] flex h-[13px] w-[15px] items-center justify-center bg-[#9c1f12] text-[8px] font-bold leading-none text-white">NX</div>
      </div>
    </Q>
    <Q c="ml-[6px] w-[22px]"><svg width="16" height="16" viewBox="0 0 16 16"><path d="M1 1h11l3 3v11H1z" stroke="#eee" fill="none" /><path d="M4 1v5h7V1M4 15v-6h8v6M6 11h4M6 13h4" stroke="#eee" fill="none" /></svg></Q>
    <WSep c="w-[8px]" />
    <Q c="ml-[2px] w-[16px]"><svg width="16" height="14" viewBox="0 0 16 14"><path d="M1 5h9q5 0 5 4t-4 4M1 5l4-4M1 5l4 4" stroke="#555" fill="none" /></svg></Q>
    <WArrow c="ml-[3px] w-[16px]" />
    <WSep c="w-[6px]" />
    <Q c="w-[22px]"><svg width="16" height="16" viewBox="0 0 16 16"><circle cx="3.5" cy="12" r="2.5" stroke="#eee" fill="none" /><circle cx="3.5" cy="5.5" r="2.5" stroke="#eee" fill="none" /><path d="M5 6l10 4M5 11L15 3" stroke="#eee" /></svg></Q>
    <Q c="ml-[1px] w-[22px]"><svg width="16" height="16" viewBox="0 0 16 16"><path d="M1 1h7l2 2v8H1zM6 5h6l3 3v7H6z" fill="#1a1a1a" stroke="#eee" /></svg></Q>
    <Q c="w-[22px]"><svg width="16" height="16" viewBox="0 0 16 16"><path d="M3 3h8v12H3zM5 3V1h4v2M8 7h3l3 3v5H8z" stroke="#555" fill="none" /></svg></Q>
    <Q c="ml-[1px] w-[24px]"><svg width="16" height="16" viewBox="0 0 16 16"><circle cx="8" cy="8" r="5" stroke="#555" fill="none" /><path d="M0 8h16M8 0v16M10 10h5v5" stroke="#555" fill="none" /></svg></Q>
    <WSep c="w-[6px]" />
    <Q c="w-[22px]"><svg width="16" height="16" viewBox="0 0 16 16"><path d="M1 1h6v4H1v4h6v4H1" stroke="#eee" fill="none" /><path d="M14 12a3.5 3.5 0 1 1-1-3M13 7v2h2" stroke="#eee" fill="none" /></svg></Q>
    <WArrow c="w-[16px]" />
    <WSep c="w-[6px]" />
    <Q c="w-[20px]"><svg width="12" height="16" viewBox="0 0 12 16"><rect x="4" y="0" width="4" height="10" rx="2" stroke="#eee" fill="none" /><path d="M1 6q0 6 5 6t5-6M6 12v3M3 15h6" stroke="#eee" fill="none" /></svg></Q>
    <WSep c="ml-[3px] w-[6px]" />
    <Q c="w-[22px]"><svg width="18" height="14" viewBox="0 0 18 14"><path d="M1 8l10-6l6 4l-9 7z" fill="#ddd" /><path d="M5 6l6 5M8 4l6 5" stroke="#333" /></svg></Q>
    <WSep c="w-[8px]" />
    <Q c="w-[22px]"><svg width="16" height="16" viewBox="0 0 16 16"><path d="M1 1h10v9H1zM1 4h10M5 6h10v9H5zM5 9h10" stroke="#eee" fill="#1a1a1a" /></svg></Q>
    <Q c="w-[22px]"><svg width="16" height="16" viewBox="0 0 16 16"><path d="M1 1h14v14H1zM1 4h14" stroke="#eee" fill="none" /></svg></Q>
    <div className="ml-[1px] w-[24px] whitespace-nowrap text-[12px]">窗口</div>
    <WArrow c="ml-[3px] w-[8px]" />
    <WArrow c="ml-[5px] w-[8px]" />
    <div className="ml-[499px] whitespace-nowrap text-[12.6px] text-[#e8e8e8]">NX 2212.3001 - 加工 - C:\Users\ASUS\Desktop\研究\五轴案例-2.prt</div>
    <div className="ml-auto pr-[23px] pt-[4px] text-[13px] font-bold tracking-[0.3px] text-white">SIEMENS</div>
    <div className="mb-[3px] mr-[3px] flex gap-[3px]">
      <div className="flex h-[20px] w-[21px] items-end justify-center rounded-[3px] border border-[#333] bg-gradient-to-b from-[#777] to-[#3a3a3a] pb-[4px]"><span className="h-[3px] w-[6px] bg-white" /></div>
      <div className="flex h-[20px] w-[20px] items-center justify-center rounded-[3px] border border-[#333] bg-gradient-to-b from-[#777] to-[#3a3a3a]"><svg width="11" height="11" viewBox="0 0 11 11"><path d="M3 3V1h7v6H8M1 3h7v7H1z" stroke="#fff" fill="none" strokeWidth="1.3" /></svg></div>
      <div className="flex h-[20px] w-[20px] items-center justify-center rounded-[3px] border border-[#922] bg-gradient-to-b from-[#f08a70] to-[#d84b30]"><svg width="12" height="12" viewBox="0 0 12 12"><path d="M1 1l10 10M11 1L1 11" stroke="#fff" strokeWidth="2.2" /></svg></div>
    </div>
  </div>
);

const tabs: [string, string][] = [
  ["w-[60px]", "曲线"],
  ["w-[62px]", "几何体"],
  ["w-[60px]", "分析"],
  ["w-[55px]", "工具"],
  ["w-[80px]", "应用模块"],
  ["w-[56px]", "视图"],
  ["w-[99px]", "星空 V8.110"],
  ["w-[108px]", "星空-加工工具"],
  ["w-[110px]", "星空-电极工具"],
  ["w-[110px]", "星空-常用工具"],
  ["w-[54px]", "机床"],
];
const TabRow = () => (
  <div className="flex h-[28px] shrink-0 items-end bg-[#1a1a1a] text-[12px] text-[#e6e6e6]">
    <div className="flex h-[27px] w-[78px] items-center justify-center rounded-t-[3px] bg-gradient-to-b from-[#2c5c9e] via-[#2a66ae] to-[#6ab6e6] text-white">文件(F)</div>
    <div className="ml-[6px] flex h-[27px] w-[54px] items-center justify-center rounded-t-[4px] bg-gradient-to-b from-[#fdfdfd] to-[#eeeeee] text-[#111]">主页</div>
    {tabs.map(([w, t]) => (
      <div key={t} className={`flex h-[27px] shrink-0 items-center justify-center whitespace-nowrap ${w}`}>{t}</div>
    ))}
    <div className="ml-auto mb-[3px] flex h-[23px] w-[198px] items-center justify-between border border-[#666] bg-[#3a3a3a] pr-[4px] text-[#aaa]">
      <span>在此输入以搜索</span>
      <svg width="18" height="18" viewBox="0 0 18 18"><circle cx="11" cy="7" r="5" stroke="#ddd" fill="none" strokeWidth="1.2" /><path d="M7 11l-5 6" stroke="#ddd" strokeWidth="2" /></svg>
    </div>
    <div className="mb-[3px] mr-[5px] flex h-[23px] items-center">
      <div className="ml-[11px] w-[16px]"><svg width="16" height="16" viewBox="0 0 16 16"><path d="M1 5V1h4M11 1h4v4M15 11v4h-4M5 15H1v-4" stroke="#eee" fill="none" /></svg></div>
      <div className="ml-[10px] w-[16px]"><svg width="16" height="14" viewBox="0 0 16 14"><path d="M1 12l7-8l7 8" stroke="#eee" fill="none" /></svg></div>
      <div className="ml-[9px] w-[16px]"><svg width="16" height="16" viewBox="0 0 16 16"><circle cx="8" cy="8" r="7" stroke="#eee" fill="none" /><text x="5" y="12" fontSize="11" fill="#eee">?</text></svg></div>
      <div className="ml-[11px] w-[16px] text-center text-[17px] font-bold leading-none text-white">!</div>
    </div>
  </div>
);

const Nav = () => (
  <div className="flex w-[446px] shrink-0 flex-col bg-[#ebebeb] pl-[7px] text-[12.5px] text-[#222]">
    <div className="flex h-[31px] shrink-0 items-center justify-between pl-[6px] pr-[15px]">
      <span className="text-[12px] font-bold">工序导航器 - 程序顺序</span>
      <span className="mt-[1px] h-[11px] w-[13px] border border-[#111] border-t-2" />
    </div>
    <div className="mr-[10px] flex h-[741px] shrink-0 flex-col overflow-hidden border border-[#777] px-px">
      <div className="flex h-[21px] shrink-0 border-b border-[#999] bg-gradient-to-b from-[#fafafa] to-[#dcdcdc] text-[12px]">
        {[
          ["w-[153px]", "名称"],
          ["w-[36px]", "换刀"],
          ["w-[36px]", "刀轨"],
          ["w-[79px]", "刀具"],
          ["w-[73px]", "夹持器"],
        ].map(([w, t]) => (
          <div key={t} className={`flex h-full items-center border-r-2 border-[#aaa] pl-[6px] ${w}`}>{t}</div>
        ))}
        <div className="flex h-full flex-1 items-center pl-[6px]">刀具号</div>
      </div>
      <div className="flex flex-1 flex-col overflow-hidden">
        {allRows.map((r, i) => <TRow key={i} r={r} i={i} />)}
      </div>
      <div className="flex h-[18px] shrink-0 items-center bg-[#efefef]">
        <B c="w-[17px]"><svg width="7" height="10" viewBox="0 0 7 10"><path d="M6 1L2 5l4 4" stroke="#444" strokeWidth="2" fill="none" /></svg></B>
        <div className="h-full w-[197px] bg-[#c8c8c8]" />
        <div className="flex-1" />
        <B c="w-[17px]"><svg width="7" height="10" viewBox="0 0 7 10"><path d="M1 1l4 4l-4 4" stroke="#444" strokeWidth="2" fill="none" /></svg></B>
      </div>
    </div>
    <div className="mr-[10px] flex h-[13px] shrink-0 items-center">
      <div className="h-px flex-1 bg-[#ccc]" />
      <div className="mx-[4px] h-[6px] w-[81px] border border-[#aaa] bg-[#e0e0e0]" />
      <div className="h-px flex-1 bg-[#ccc]" />
    </div>
    {["相关性", "细节"].map((t) => (
      <div key={t} className="mr-[10px] mb-px flex h-[22px] shrink-0 items-center border-b border-[#999] bg-gradient-to-b from-[#f8f8f8] via-[#f2f2f2] to-[#d8d8d8] pl-[6px] text-[12px] text-[#1a1a66]">
        <span className="flex-1">{t}</span>
        <div className="flex h-full w-[22px] items-center justify-center border-l border-[#bbb]">
          <svg width="12" height="9" viewBox="0 0 12 9"><path d="M1 1l5 6l5-6" stroke="#666" strokeWidth="2.4" fill="none" /></svg>
        </div>
      </div>
    ))}
  </div>
);

const maroon = "#8a4064";
const Part = () => (
  <svg className="absolute inset-0 h-full w-full [&_path]:[vector-effect:non-scaling-stroke] [&_ellipse]:[vector-effect:non-scaling-stroke]" viewBox="477 207 1443 811">
    <g transform="translate(700 520) scale(0.3954 0.3333)" strokeLinejoin="round">
      <path d="M45,483 C200,590 400,740 592,910 L597,958 C420,770 200,630 70,545 Z" fill="#6b6b6b" stroke="#2b2b2b" strokeWidth="1" />
      <path d="M592,910 C880,640 1250,390 1497,210 L1485,265 C1200,470 880,700 597,958 Z" fill="#777" stroke="#2b2b2b" strokeWidth="1" />
      <path d="M45,483 C250,230 600,-40 925,-253 C1120,-150 1350,30 1497,210 C1250,390 880,640 592,910 C400,740 200,590 45,483 Z" fill="#a9a9a9" stroke="#333" strokeWidth="1" />
      <path d="M510,55 C620,-30 740,-115 845,-195 Q870,-200 890,-190 Q920,-175 965,-205 Q990,-215 1010,-210 L1110,-145 L1060,-105 L990,-140 Q960,-120 930,-115 Q900,-110 855,-125 L580,78 L520,80 Q495,75 510,55 Z" fill="#767676" stroke="#2b2b2b" strokeWidth="1" />
      <path d="M845,-195 Q870,-200 890,-190 L892,-125 Q870,-130 855,-125 Z" fill={maroon} stroke="#333" strokeWidth=".6" />
      <path d="M890,-190 Q925,-175 965,-205 L965,-140 Q925,-105 892,-125 Z" fill="#8c8c8c" />
      <path d="M965,-205 Q990,-215 1010,-210 L1012,-148 Q985,-150 965,-140 Z" fill={maroon} stroke="#333" strokeWidth=".6" />
      <path d="M510,55 Q500,72 520,80 Z" fill="#2277cc" />
      <path d="M580,78 L855,-125 Q890,-110 920,-115 Q960,-120 990,-140 L1060,-105" stroke="#2fe6e6" strokeWidth="1.1" fill="none" />
      <path d="M520,80 L800,78 L950,-15" stroke="#333" strokeWidth="1" fill="none" />
      <path d="M160,380 L455,100 L580,85 Q602,90 605,110 L582,132 L465,150 L190,425 Z" fill="#767676" stroke="#2b2b2b" strokeWidth="1" />
      <path d="M452,100 L478,95 L488,140 L465,148 Z" fill="#58b8ea" stroke="#333" strokeWidth=".6" />
      <path d="M582,85 Q605,92 603,112 L585,128 Z" fill="#2277cc" />
      <path d="M160,380 Q152,402 185,420 L178,393 Z" fill={maroon} />
      <path d="M188,425 L467,152 L582,137" stroke="#ffee33" strokeWidth="4.5" fill="none" />
      <path d="M135,490 L185,440 L215,465 L160,528 Q125,520 135,490 Z" fill="#a0a0a0" stroke="#333" strokeWidth=".8" />
      <path d="M135,490 Q125,515 155,527 L155,505 Z" fill={maroon} />
      <path d="M162,523 Q195,515 205,460" stroke="#f5b0b0" strokeWidth="3.4" fill="none" />
      <path d="M185,520 L635,92 L800,85 L945,-25 Q970,-35 990,-25 L1135,100 Q1145,115 1115,145 L990,35 Q970,35 950,40 L810,145 L640,150 L210,565 Q178,545 185,520 Z" fill="#767676" stroke="#2b2b2b" strokeWidth="1" />
      <path d="M665,86 L800,85 L945,-25 L945,42 L810,146 L665,146 Z" fill="#10bb7a" />
      <path d="M800,85 L822,82 L948,-5 L945,42 L810,146 Z" fill="#0cc07a" />
      <path d="M637,88 L665,85 L665,147 L640,150 Z" fill={maroon} stroke="#333" strokeWidth=".5" />
      <path d="M945,-25 Q970,-35 990,-25 L990,35 Q970,35 948,42 Z" fill={maroon} stroke="#333" strokeWidth=".5" />
      <path d="M185,520 Q178,545 210,565 L203,537 Z" fill={maroon} />
      <path d="M1133,100 Q1145,115 1127,135 Z" fill={maroon} />
      <path d="M212,566 L640,153 L810,150 L950,45 Q970,36 990,42 L1113,148" stroke="#27e0a8" strokeWidth="1.2" fill="none" />
      <path d="M210,565 C290,630 360,680 420,730 Q440,742 460,730" stroke="#333" strokeWidth=".9" fill="none" />
      <path d="M460,740 C700,510 950,300 1140,135 Q1165,125 1185,140 L1305,265 Q1310,285 1285,310 L1185,195 Q1160,190 1140,195 C900,390 700,570 485,785 Q450,770 460,740 Z" fill="#767676" stroke="#2b2b2b" strokeWidth="1" />
      <path d="M1140,135 Q1165,125 1185,140 L1185,195 Q1160,188 1142,193 Z" fill={maroon} stroke="#333" strokeWidth=".5" />
      <path d="M460,740 Q455,765 482,783 L475,756 Z" fill={maroon} />
      <path d="M1302,265 Q1310,285 1288,305 Z" fill={maroon} />
      <path d="M490,795 C700,580 930,390 1140,205 Q1160,195 1180,205 L1280,315" stroke="#2fe6e6" strokeWidth="1.1" fill="none" />
      <path d="M488,795 Q515,808 545,780 L590,735 L645,785 Q670,800 700,780 L1340,310" stroke="#333" strokeWidth=".9" fill="none" />
      <path d="M1280,317 L1340,310 L1335,345" stroke="#333" strokeWidth=".9" fill="none" />
      <path d="M995,-55 L1105,-125 Q1125,-132 1150,-125 L1300,10 Q1310,25 1290,42 L1150,-62 Q1125,-70 1100,-62 L1025,-15 Q985,-25 995,-55 Z" fill="#767676" stroke="#2b2b2b" strokeWidth="1" />
      <path d="M1105,-125 Q1125,-132 1150,-125 L1150,-62 Q1125,-70 1102,-62 Z" fill={maroon} stroke="#333" strokeWidth=".5" />
      <path d="M1298,10 Q1310,25 1292,40 Z" fill={maroon} />
      <path d="M1030,-3 L1120,-52 Q1128,-55 1140,-48 L1265,50" stroke="#2fe6e6" strokeWidth="1.1" fill="none" />
      <path d="M1268,55 L1445,240 L1425,292 L1265,125 Z" fill="#6d6d6d" stroke="#2b2b2b" strokeWidth="1" />
      <path d="M1265,90 Q1245,100 1258,118 L1425,295" stroke="#2fe6e6" strokeWidth="1.1" fill="none" />
      <path d="M1445,255 L1430,310 L1418,295" stroke="#e8a820" strokeWidth="1.3" fill="none" />
      <path d="M1370,305 L1355,355 L1340,340" stroke="#f0b8c8" strokeWidth="1.1" fill="none" />
      <path d="M405,470 L405,515 L480,577 Q490,578 745,325 L740,290 L485,535 Z" fill="#767676" stroke="#222" strokeWidth="1" />
      <path d="M410,470 L665,237 Q672,232 680,240 L740,290 L490,530 Q482,538 475,530 Z" fill="#a9a9a9" stroke="#333" strokeWidth=".9" />
      <path d="M485,535 L480,577" stroke="#333" strokeWidth=".8" />
      <path d="M403,515 L480,576 L745,325" stroke="#27e0a8" strokeWidth="1.2" fill="none" />
      <path d="M805,-80 L815,60 M830,-110 L840,50 M810,255 L832,440 M785,270 L810,440 M1470,145 L1455,210 M1400,175 L1375,285" stroke="#2c34e0" strokeWidth="1" strokeDasharray="8 10" fill="none" />
      <path d="M778,460 L783,215" stroke="#3b6de0" strokeWidth="1" />
      <path d="M783,215 L794,265 L774,265 Z" fill="#1438c0" />
      <path d="M778,460 L935,360" stroke="#b4d8a8" strokeWidth="1.6" />
      <path d="M970,338 L925,352 L938,372 Z" fill="#a8d8a0" />
      <path d="M778,460 L920,585" stroke="#e8a0a0" strokeWidth="1.4" />
      <path d="M955,605 L908,585 L925,568 Z" fill="#eba0a0" />
      <path d="M770,-375 L803,-375 L803,-280 L770,-280 Z" fill="#6c6c6c" fillOpacity=".85" />
      <path d="M775,-283 L805,-285 L820,-95 L790,-95 Z" fill="#a88810" stroke="#6c5a10" strokeWidth=".6" />
      <ellipse cx="790" cy="-283" rx="15" ry="9" fill="#d8b818" stroke="#6c5a10" strokeWidth=".6" />
      <ellipse cx="805" cy="-96" rx="14" ry="13" fill="#e6e6e6" />
      <path d="M714,-525 L835,-525 L840,-375 Q782,-315 724,-375 Z" fill="#a4654a" stroke="#5c3a2a" strokeWidth=".7" />
      <ellipse cx="782" cy="-375" rx="58" ry="36" fill="#a86a4c" stroke="#5c3a2a" strokeWidth=".6" />
      <ellipse cx="783" cy="-377" rx="16" ry="11" fill="#b8a090" stroke="#5c3a2a" strokeWidth=".6" />
      <path d="M768,-377 L770,-340 L803,-340 L799,-377 Z" fill="#a28272" fillOpacity=".8" />
      <path d="M640,-660 L885,-660 L890,-600 Q880,-530 835,-522 Q770,-505 714,-522 Q650,-540 640,-590 Z" fill="#a4654a" stroke="#5c3a2a" strokeWidth=".8" />
      <path d="M638,-610 Q760,-510 888,-615 M640,-590 Q760,-495 888,-595 M650,-560 Q770,-490 880,-565" stroke="#44291c" strokeWidth="1" fill="none" />
      <ellipse cx="760" cy="-690" rx="123" ry="88" fill="#ba7c5c" stroke="#5c3a2a" strokeWidth=".8" />
      <ellipse cx="762" cy="-678" rx="104" ry="62" fill="#c08466" stroke="#8a5a40" strokeWidth=".7" />
      <ellipse cx="765" cy="-650" rx="88" ry="52" fill="#b87a5a" stroke="#7a4e36" strokeWidth=".7" />
      <ellipse cx="766" cy="-625" rx="80" ry="42" fill="#bc7e5e" stroke="#7a4e36" strokeWidth=".7" />
      <path d="M636,-690 Q636,-590 760,-600 Q885,-590 884,-690" stroke="#5c3a2a" strokeWidth=".8" fill="none" />
      <ellipse cx="770" cy="-590" rx="50" ry="22" fill="#9a5e44" stroke="#5c3a2a" strokeWidth=".7" />
    </g>
    <g fontFamily="Noto Sans" fontSize="13">
      <text x="988" y="591" fill="#3b6de0">ZM</text>
      <text x="1063" y="630" fill="#4a9a4a">YM</text>
      <text x="1057" y="736" fill="#b03030">XM</text>
    </g>
    <path d="M584,873 L554,890 L584,910 L614,893 Z M554,890 L553,924 L582,943 L613,928 L614,893 M584,910 L582,943" stroke="#b8b8b8" strokeWidth="1" fill="none" />
    <path d="M584.5,893 L585.5,868" stroke="#0b30b8" strokeWidth="4" />
    <path d="M586,852 L591,870 L580,870 Z" fill="#0b30b8" />
    <path d="M614,893 L625,886" stroke="#2aa33c" strokeWidth="4" />
    <path d="M637,880 L621,881 L627,891 Z" fill="#2aa33c" />
    <path d="M598,917 L622,935" stroke="#c02222" strokeWidth="4.5" />
    <path d="M635,943 L617,937 L624,928 Z" fill="#c02222" />
    <g fontFamily="Noto Sans" fontSize="11">
      <text x="582" y="847" fill="#3a5fd8">Z</text>
      <text x="640" y="880" fill="#2aa33c">Y</text>
      <text x="636" y="950" fill="#c02222">X</text>
    </g>
  </svg>
);

const Viewport = () => (
  <div className="flex min-w-0 flex-1 flex-col">
    <div className="flex h-[26px] shrink-0 bg-[#ebebeb] pl-[3px] text-[12px]">
      <div className="flex h-[25px] w-[142px] items-center bg-[#4f4f4f] pl-[3px] text-white">
        <svg width="18" height="16" viewBox="0 0 18 16" className="mr-[3px] shrink-0"><path d="M1 1h5v5H1v5h5" stroke="#3a3a3a" fill="none" /><path d="M16 10a4 4 0 1 1-1-3" stroke="#3a3a3a" fill="none" /></svg>
        <span className="whitespace-nowrap">五轴案例-2.prt</span>
        <svg width="12" height="12" viewBox="0 0 12 12" className="ml-[6px] shrink-0"><path d="M1 1h6l3 3v7H1zM6 8l4-5" stroke="#fff" fill="none" strokeWidth="1.2" /></svg>
        <svg width="10" height="10" viewBox="0 0 10 10" className="ml-[6px] shrink-0"><path d="M1 1l8 8M9 1L1 9" stroke="#fff" strokeWidth="2" /></svg>
      </div>
    </div>
    <div className="relative flex-1 overflow-hidden bg-gradient-to-b from-[#232527] to-[#5b5c5e]">
      <Part />
    </div>
  </div>
);

const Status = () => (
  <div className="relative flex h-[21px] shrink-0 items-center border-t border-[#f4f4f4] bg-[#d8d8d8] text-[12px]">
    <span className="ml-[905px] font-bold text-[#222]">3 个对象 已选定</span>
    <span className="ml-auto h-full w-px bg-[#aaa]" />
    <svg width="16" height="16" viewBox="0 0 16 16" className="ml-[5px] shrink-0"><path d="M8 1q2 0 2 2q3 1 3 7l2 3H1l2-3q0-6 3-7q0-2 2-2zM6 14q2 2 4 0" stroke="#444" fill="none" /></svg>
    <span className="ml-[6px] text-[#111]">通知</span>
    <span className="ml-[36px] mr-[16px] h-full w-px bg-[#aaa]" />
    <div className="absolute right-[2px] top-[3px] whitespace-nowrap text-[15px] leading-[18px] tracking-[0.2px] text-[#f6f6f6] [font-family:'Liberation_Serif','Noto_Sans_CJK_SC',serif] [text-shadow:0_0_1px_#444]">
      UG爱好者论坛@学习雷锋好榜样*
    </div>
  </div>
);

export default function App() {
  return (
    <div className="flex h-[1046px] w-[1920px] flex-col overflow-hidden bg-[#d8d8d8] text-[12px] [font-family:'Noto_Sans','Noto_Sans_CJK_SC',sans-serif]">
      <TitleBar />
      <TabRow />
      <Ribbon />
      <Toolbar />
      <div className="flex h-[838px] shrink-0 border-t border-[#c8c8c8]">
        <Rail />
        <Nav />
        <Viewport />
      </div>
      <Status />
      <div className="flex h-[7px] shrink-0 bg-[#1c2f3a]">
        <div className="ml-[342px] h-full w-[45px] bg-[#3c515c]" />
      </div>
    </div>
  );
}
